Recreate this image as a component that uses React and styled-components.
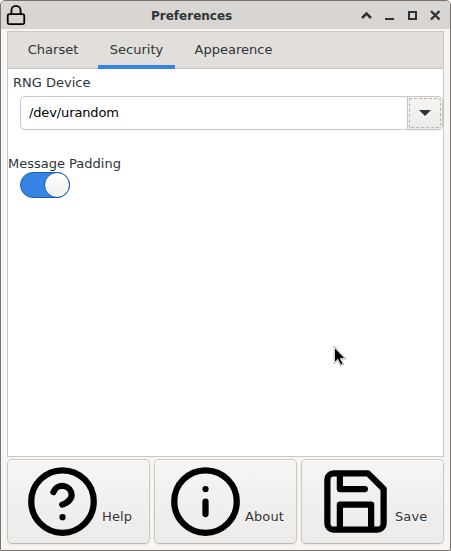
import React from 'react';
import styled, { createGlobalStyle } from 'styled-components';

const GlobalStyle = createGlobalStyle`
  * { box-sizing: border-box; }
  body { margin: 0; background: #fff; }
  button, input { font: inherit; color: inherit; margin: 0; }
`;

const Window = styled.div`
  position: relative;
  width: 451px;
  height: 551px;
  display: flex;
  flex-direction: column;
  border: 1px solid #77736f;
  border-radius: 5px 5px 1px 1px;
  background: #f6f5f4;
  overflow: hidden;
  color: #2e3436;
  font: 13px/16px 'DejaVu Sans', sans-serif;
`;

const TitleBar = styled.header`
  height: 28px;
  flex: none;
  display: flex;
  align-items: center;
  padding: 0 7px 0 4px;
  background: linear-gradient(#dad6d3, #d8d4d1);
`;

const Title = styled.h1`
  flex: 1;
  margin: 0;
  padding: 1px 0 0 124px;
  font-size: 12px;
  line-height: 28px;
  font-weight: bold;
`;

const WindowControls = styled.div`
  display: flex;
  gap: 7px;
`;

const ControlButton = styled.button`
  width: 16px;
  height: 16px;
  padding: 0;
  border: 0;
  background: none;
  svg { display: block; }
`;

const Notebook = styled.main`
  flex: none;
  height: 426px;
  margin: 2px 6px 0;
  display: flex;
  flex-direction: column;
  border: 1px solid #cdc7c2;
  background: #fff;
`;

const TabList = styled.nav`
  height: 37px;
  flex: none;
  display: flex;
  gap: 8px;
  padding-left: 8px;
  background: #e1dedb;
  border-bottom: 1px solid #cdc7c2;
`;

const Tab = styled.button`
  width: ${(p) => p.$width}px;
  height: 37px;
  padding: 0 0 2px;
  border: 0;
  background: none;
  box-shadow: ${(p) => (p.$active ? 'inset 0 -4px #3584e4' : 'none')};
`;

const Panel = styled.section`
  display: flex;
  flex-direction: column;
  align-items: flex-start;
  padding-top: 5px;
`;

const Label = styled.label`
  height: 16px;
  margin-left: ${(p) => p.$indent}px;
  line-height: 17px;
`;

const ComboBox = styled.div`
  display: flex;
  width: 423px;
  height: 34px;
  margin: 6px 0 25px 12px;
`;

const ComboInput = styled.input`
  width: 387px;
  padding: 0 8px 1px;
  border: 1px solid #cdc7c2;
  border-right: 0;
  border-radius: 5px 0 0 5px;
  background: #fff;
  color: #000;
  letter-spacing: -0.13px;
  outline: none;
`;

const ComboButton = styled.button`
  width: 36px;
  padding: 1px;
  border: 1px solid #cdc7c2;
  border-radius: 0 5px 5px 0;
  background: linear-gradient(#f6f5f4, #edebe9);
  box-shadow: 0 1px 2px rgba(0, 0, 0, 0.07);
`;

const FocusRing = styled.span`
  display: flex;
  align-items: center;
  justify-content: center;
  height: 30px;
  border: 1px dashed #b5b5b5;
  border-radius: 0 4px 4px 0;
`;

const Switch = styled.button`
  display: flex;
  justify-content: flex-end;
  width: 50px;
  height: 26px;
  margin: 1px 0 0 12px;
  padding: 0;
  border: 1px solid #185fb4;
  border-radius: 13px;
  background: #3584e4;
`;

const Knob = styled.span`
  width: 26px;
  height: 26px;
  margin: -1px;
  border: 1px solid #185fb4;
  border-radius: 50%;
  background: linear-gradient(#fff, #f1f0ef);
`;

const Actions = styled.footer`
  display: flex;
  gap: 4px;
  margin: 2px 6px 0;
`;

const ActionButton = styled.button`
  display: flex;
  align-items: flex-start;
  justify-content: flex-start;
  gap: 2px;
  width: 143px;
  height: 85px;
  padding: 4px 0 0 ${(p) => p.$inset}px;
  border: 1px solid #cdc7c2;
  border-bottom-color: #bfb8b1;
  border-radius: 5px;
  background: linear-gradient(#f6f5f4, #edebe9);
  box-shadow: inset 0 1px #fff, 0 1px 2px rgba(0, 0, 0, 0.07);
  text-shadow: 0 1px rgba(255, 255, 255, 0.75);
  letter-spacing: 0.1px;
`;

const ActionLabel = styled.span`
  margin-top: 45px;
`;

const Pointer = styled.svg`
  position: absolute;
  left: 332px;
  top: 345px;
`;

function Icon({ size, children }) {
  return (
    <svg width={size} height={size} viewBox="0 0 24 24" fill="none" stroke="#000"
      strokeWidth="2" strokeLinecap="round" strokeLinejoin="round">
      {children}
    </svg>
  );
}

function Control({ label, children }) {
  return (
    <ControlButton aria-label={label}>
      <svg width="16" height="16" fill="none" stroke="#2e3436" strokeWidth="2">{children}</svg>
    </ControlButton>
  );
}

const actions = [
  {
    label: 'Help',
    inset: 17,
    icon: (
      <>
        <circle cx="12" cy="12" r="10" />
        <path d="M9.09 9a3 3 0 0 1 5.83 1c0 2-3 3-3 3M12 17h.01" />
      </>
    ),
  },
  {
    label: 'About',
    inset: 13,
    icon: (
      <>
        <circle cx="12" cy="12" r="10" />
        <path d="M12 16v-4M12 8h.01" />
      </>
    ),
  },
  {
    label: 'Save',
    inset: 16,
    icon: (
      <path d="M19 21H5a2 2 0 0 1-2-2V5a2 2 0 0 1 2-2h11l5 5v11a2 2 0 0 1-2 2zM17 21v-8H7v8M7 3v5h8" />
    ),
  },
];

export default function App() {
  return (
    <>
      <GlobalStyle />
      <Window>
        <TitleBar>
          <Icon size={22}>
            <rect x="3" y="11" width="18" height="11" rx="2" />
            <path d="M7 11V7a5 5 0 0 1 10 0v4" />
          </Icon>
          <Title>Preferences</Title>
          <WindowControls>
            <Control label="Shade"><path d="M4 11l4.5-4.5 4.5 4.5" strokeWidth="2.6" /></Control>
            <Control label="Minimize"><path d="M4 12h9" /></Control>
            <Control label="Maximize"><path d="M5 5h7v7H5z" /></Control>
            <Control label="Close"><path d="M4 4l8.5 8.5M12.5 4l-8.5 8.5" strokeWidth="2.4" /></Control>
          </WindowControls>
        </TitleBar>
        <Notebook>
          <TabList>
            <Tab $width={74}>Charset</Tab>
            <Tab $width={77} $active>Security</Tab>
            <Tab $width={101}>Appearence</Tab>
          </TabList>
          <Panel>
            <Label $indent={5}>RNG Device</Label>
            <ComboBox>
              <ComboInput aria-label="RNG Device" defaultValue="/dev/urandom" />
              <ComboButton aria-label="Show devices">
                <FocusRing>
                  <svg width="12" height="6"><path d="M0 0h12L6 6z" fill="#2e3436" /></svg>
                </FocusRing>
              </ComboButton>
            </ComboBox>
            <Label $indent={0}>Message Padding</Label>
            <Switch role="switch" aria-checked="true" aria-label="Message Padding">
              <Knob />
            </Switch>
          </Panel>
        </Notebook>
        <Actions>
          {actions.map(({ label, inset, icon }) => (
            <ActionButton key={label} $inset={inset}>
              <Icon size={75}>{icon}</Icon>
              <ActionLabel>{label}</ActionLabel>
            </ActionButton>
          ))}
        </Actions>
        <Pointer width="14" height="21">
          <path d="M1.5 1.5v15l3.4-3.2 2.8 5.8 2.3-1.1-2.7-5.6h4.6z" fill="#000" stroke="#999" strokeWidth="1.6" />
          <path d="M1.5 1.5v15l3.4-3.2 2.8 5.8 2.3-1.1-2.7-5.6h4.6z" fill="#000" stroke="#fff" strokeWidth="0.8" />
        </Pointer>
      </Window>
    </>
  );
}
